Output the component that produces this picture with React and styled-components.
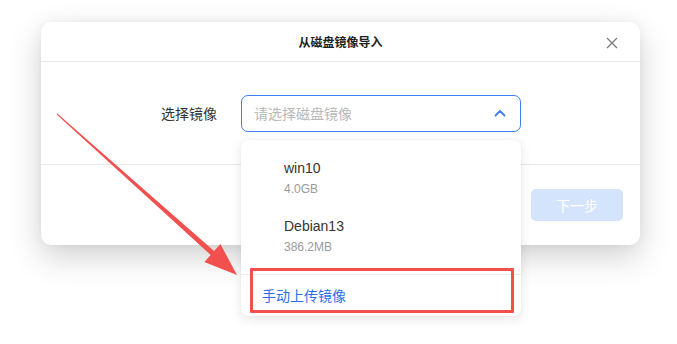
import React from "react";
import styled, { createGlobalStyle } from "styled-components";

const Global = createGlobalStyle`
  html, body { margin: 0; padding: 0; background: #ffffff; }
  body { font-family: "Liberation Sans", "Noto Sans CJK SC", sans-serif; }
  * { box-sizing: border-box; }
`;

const Stage = styled.div`
  position: relative;
  width: 677px;
  height: 344px;
  padding: 22px 0 0 41px;
  overflow: hidden;
  background: #ffffff;
`;

const Dialog = styled.div`
  position: relative;
  width: 599px;
  height: 223px;
  background: #ffffff;
  border-radius: 10px;
  box-shadow: 0 12px 32px rgba(0, 0, 0, 0.18), 0 0 12px rgba(0, 0, 0, 0.05);
  display: flex;
  flex-direction: column;
`;

const Header = styled.div`
  position: relative;
  height: 40px;
  display: flex;
  align-items: center;
  justify-content: center;
  border-bottom: 1px solid #e8e8e8;
`;

const Title = styled.div`
  font-size: 12px;
  font-weight: 700;
  color: #222;
`;

const CloseBtn = styled.button`
  position: absolute;
  right: 22px;
  top: 15px;
  width: 12px;
  height: 12px;
  padding: 0;
  border: 0;
  background: transparent;
  display: flex;
`;

const Body = styled.div`
  height: 103px;
  display: grid;
  grid-template-columns: 176px 280px;
  column-gap: 24px;
  align-items: center;
  border-bottom: 1px solid #e8e8e8;
`;

const Label = styled.div`
  text-align: right;
  font-size: 14px;
  color: #333;
`;

const SelectWrap = styled.div`
  position: relative;
  z-index: 2;
`;

const SelectBox = styled.div`
  height: 37px;
  border: 1px solid #3f7ff3;
  border-radius: 7px;
  display: flex;
  align-items: center;
  justify-content: space-between;
  padding: 0 14px 0 12px;
  background: #fff;
`;

const Placeholder = styled.span`
  font-size: 14px;
  color: #b8b8b8;
`;

const Dropdown = styled.div`
  position: absolute;
  left: 0;
  top: 45px;
  width: 280px;
  background: #fff;
  border-radius: 7px;
  box-shadow: 0 3px 12px rgba(0, 0, 0, 0.1), 0 0 2px rgba(0, 0, 0, 0.06);
  padding-top: 8px;
`;

const Item = styled.div`
  padding: 10px 0 8px 43px;
  display: flex;
  flex-direction: column;
  gap: 2px;
`;

const ItemName = styled.div`
  font-size: 14px;
  line-height: 20px;
  color: #333;
`;

const ItemSize = styled.div`
  font-size: 12px;
  line-height: 18px;
  color: #9a9a9a;
`;

const DropFooter = styled.div`
  position: relative;
  margin-top: 10px;
  border-top: 1px solid #ececec;
  height: 42px;
  display: flex;
  align-items: center;
  padding-left: 21px;
  font-size: 14px;
  color: #2a6ef0;
`;

const Highlight = styled.div`
  position: absolute;
  left: 9px;
  top: -7px;
  width: 264px;
  height: 45px;
  border: 3px solid #f24f4f;
  border-radius: 1px;
  pointer-events: none;
`;

const Footer = styled.div`
  flex: 1;
  display: flex;
  align-items: center;
  justify-content: flex-end;
  padding-right: 17px;
`;

const NextButton = styled.button`
  width: 92px;
  height: 32px;
  border: 0;
  border-radius: 5px;
  background: #d5e4fd;
  color: #ffffff;
  font-family: inherit;
  font-size: 14px;
`;

const ArrowLayer = styled.svg`
  position: absolute;
  left: 0;
  top: 0;
  width: 677px;
  height: 344px;
  pointer-events: none;
  z-index: 5;
`;

const images = [
  { name: "win10", size: "4.0GB" },
  { name: "Debian13", size: "386.2MB" },
];

function Arrow() {
  const sx = 57, sy = 114, tx = 237, ty = 275;
  const dx = tx - sx, dy = ty - sy;
  const len = Math.hypot(dx, dy);
  const ux = dx / len, uy = dy / len;
  const nx = -uy, ny = ux;
  const headLen = 33, headHalf = 12, shaftHalf = 2.6, startHalf = 0.5;
  const bx = tx - ux * headLen, by = ty - uy * headLen;
  const p = (x, y) => `${x.toFixed(1)},${y.toFixed(1)}`;
  const pts = [
    p(sx + nx * startHalf, sy + ny * startHalf),
    p(bx + nx * shaftHalf, by + ny * shaftHalf),
    p(bx + nx * headHalf, by + ny * headHalf),
    p(tx, ty),
    p(bx - nx * headHalf, by - ny * headHalf),
    p(bx - nx * shaftHalf, by - ny * shaftHalf),
    p(sx - nx * startHalf, sy - ny * startHalf),
  ].join(" ");
  return (
    <ArrowLayer viewBox="0 0 677 344">
      <polygon points={pts} fill="#f24f4f" />
    </ArrowLayer>
  );
}

export default function App() {
  return (
    <>
      <Global />
      <Stage>
        <Dialog>
          <Header>
            <Title>从磁盘镜像导入</Title>
            <CloseBtn aria-label="close">
              <svg width="12" height="12" viewBox="0 0 12 12">
                <path d="M1 1 L11 11 M11 1 L1 11" stroke="#7a7a7a" strokeWidth="1.3" fill="none" />
              </svg>
            </CloseBtn>
          </Header>
          <Body>
            <Label>选择镜像</Label>
            <SelectWrap>
              <SelectBox>
                <Placeholder>请选择磁盘镜像</Placeholder>
                <svg width="12" height="8" viewBox="0 0 12 8">
                  <path d="M1.5 6.5 L6 2 L10.5 6.5" stroke="#3f7ff3" strokeWidth="1.8" fill="none" strokeLinecap="round" strokeLinejoin="round" />
                </svg>
              </SelectBox>
              <Dropdown>
                {images.map((img) => (
                  <Item key={img.name}>
                    <ItemName>{img.name}</ItemName>
                    <ItemSize>{img.size}</ItemSize>
                  </Item>
                ))}
                <DropFooter>
                  手动上传镜像
                  <Highlight />
                </DropFooter>
              </Dropdown>
            </SelectWrap>
          </Body>
          <Footer>
            <NextButton>下一步</NextButton>
          </Footer>
        </Dialog>
        <Arrow />
      </Stage>
    </>
  );
}
